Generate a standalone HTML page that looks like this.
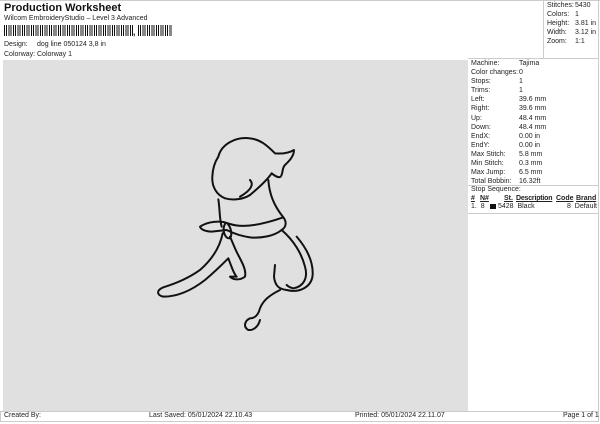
<!DOCTYPE html>
<html><head><style>
body{margin:0;width:600px;height:424px;background:#fff;font-family:"Liberation Sans",sans-serif;font-size:7px;color:#222;position:relative;overflow:hidden}
.a{position:absolute;white-space:nowrap}
.grey{position:absolute;left:3px;top:60px;width:465px;height:351px;background:#e0e0e0}
table{border-collapse:collapse}
td{padding:0;height:9.1px;font-size:7px;line-height:9.1px}
</style></head><body>
<div style="position:absolute;left:0;top:0;width:600px;height:0;border-top:1px solid #ccc"></div>
<div class="a" style="left:4px;top:2px;font-size:11px;font-weight:bold;color:#111">Production Worksheet</div>
<div class="a" style="left:4px;top:15px">Wilcom EmbroideryStudio – Level 3 Advanced</div>
<div class="a" style="left:4px;top:25px;width:130px;height:11px;background:repeating-linear-gradient(90deg,#111 0 1px,#fff 1px 2px,#111 2px 3px,#fff 3px 4.5px)"></div>
<div class="a" style="left:133px;top:27px;font-size:9px;font-weight:bold">,</div>
<div class="a" style="left:138px;top:25px;width:34px;height:11px;background:repeating-linear-gradient(90deg,#111 0 1px,#fff 1px 2px,#111 2px 3px,#fff 3px 4.5px)"></div>
<div class="a" style="left:4px;top:41px">Design:</div><div class="a" style="left:37px;top:41px">dog line 050124 3,8 in</div>
<div class="a" style="left:4px;top:51px">Colorway:</div><div class="a" style="left:37px;top:51px">Colorway 1</div>
<div style="position:absolute;left:543px;top:0;width:1px;height:58px;background:#ccc"></div>
<div style="position:absolute;left:468px;top:58px;width:130px;height:1px;background:#ccc"></div>
<div style="position:absolute;left:598px;top:0;width:1px;height:422px;background:#ccc"></div>
<table class="a" style="left:547px;top:1px"><tr><td style="width:28px">Stitches:</td><td>5430</td></tr><tr><td>Colors:</td><td>1</td></tr><tr><td>Height:</td><td>3.81 in</td></tr><tr><td>Width:</td><td>3.12 in</td></tr><tr><td>Zoom:</td><td>1:1</td></tr></table>
<div class="grey"></div>
<table class="a" style="left:471px;top:59px">
<tr><td style="width:48px">Machine:</td><td>Tajima</td></tr><tr><td>Color changes:</td><td>0</td></tr><tr><td>Stops:</td><td>1</td></tr><tr><td>Trims:</td><td>1</td></tr><tr><td>Left:</td><td>39.6 mm</td></tr><tr><td>Right:</td><td>39.6 mm</td></tr><tr><td>Up:</td><td>48.4 mm</td></tr><tr><td>Down:</td><td>48.4 mm</td></tr><tr><td>EndX:</td><td>0.00 in</td></tr><tr><td>EndY:</td><td>0.00 in</td></tr><tr><td>Max Stitch:</td><td>5.8 mm</td></tr><tr><td>Min Stitch:</td><td>0.3 mm</td></tr><tr><td>Max Jump:</td><td>6.5 mm</td></tr><tr><td>Total Bobbin:</td><td>16.32ft</td></tr></table>
<div style="position:absolute;left:468px;top:185px;width:130px;height:1px;background:#ccc"></div>
<div class="a" style="left:471px;top:186px">Stop Sequence:</div>
<div class="a" style="left:471px;top:195px;font-weight:bold;text-decoration:underline">#</div>
<div class="a" style="left:480px;top:195px;font-weight:bold;text-decoration:underline">N#</div>
<div class="a" style="left:504px;top:195px;font-weight:bold;text-decoration:underline">St.</div>
<div class="a" style="left:516px;top:195px;font-weight:bold;text-decoration:underline;letter-spacing:-0.2px">Description</div>
<div class="a" style="left:556px;top:195px;font-weight:bold;text-decoration:underline">Code</div>
<div class="a" style="left:576px;top:195px;font-weight:bold;text-decoration:underline">Brand</div>
<div class="a" style="left:471px;top:203px">1.&nbsp; 8</div>
<div class="a" style="left:490px;top:204px;width:6px;height:5px;background:#111"></div>
<div class="a" style="left:498px;top:203px">5428&nbsp; Black</div>
<div class="a" style="left:567px;top:203px">8&nbsp; Default</div>
<div style="position:absolute;left:468px;top:213px;width:130px;height:1px;background:#ccc"></div>
<div style="position:absolute;left:0;top:411px;width:599px;height:1px;background:#ccc"></div>
<div style="position:absolute;left:0;top:421px;width:599px;height:1px;background:#ccc"></div>
<div style="position:absolute;left:0;top:411px;width:1px;height:11px;background:#ccc"></div>
<div class="a" style="left:4px;top:412px">Created By:</div>
<div class="a" style="left:149px;top:412px">Last Saved: 05/01/2024 22.10.43</div>
<div class="a" style="left:355px;top:412px">Printed: 05/01/2024 22.11.07</div>
<div class="a" style="left:563px;top:412px">Page 1 of 1</div>
<svg class="a" style="left:0;top:0" width="600" height="424"><g transform="translate(150,130) scale(0.3333)" fill="none" stroke="#111" stroke-width="6" stroke-linejoin="round" stroke-linecap="round">
<path d="M205 80 C215 40 260 20 300 25 C330 28 350 45 375 70 C395 72 415 70 432 60 C432 80 415 95 405 105 C395 115 400 130 392 140 C385 145 375 138 365 130 C355 145 330 170 300 195 C280 208 250 212 225 205 C200 195 185 170 187 140 C188 115 195 95 205 80 Z"/>
<path d="M300 150 C312 162 305 180 270 200"/>
<path d="M205 208 C210 240 208 265 215 290"/>
<path d="M355 150 C358 190 370 225 400 262"/>
<path d="M150 290 C165 280 190 272 220 276 L240 282 C270 292 320 290 400 262 C410 275 410 290 395 300 C370 320 330 325 300 322 C270 318 250 310 230 300 L185 305 C165 304 152 298 150 290 Z"/>
<path d="M225 282 C215 300 225 325 238 325 C248 320 245 295 232 280"/>
<path d="M395 300 C430 330 455 370 465 410 C475 445 460 470 430 475 C420 473 412 468 410 465"/>
<path d="M440 320 C470 355 490 395 488 435 C485 470 450 490 410 480 C390 478 375 470 372 440 L375 405"/>
<path d="M390 480 C360 495 340 510 330 535 C325 555 315 565 300 565 C285 572 278 590 295 600 C310 602 325 590 330 570"/>
<path d="M218 310 C210 350 190 385 150 420 C115 445 80 460 40 472 C20 480 18 495 40 500 C80 500 120 485 165 450 C195 425 220 400 235 385 C245 410 250 430 260 440 L240 440 C250 450 270 452 285 440 C290 420 275 395 262 370 C252 350 245 330 240 320"/>
</g></svg>
</body></html>
